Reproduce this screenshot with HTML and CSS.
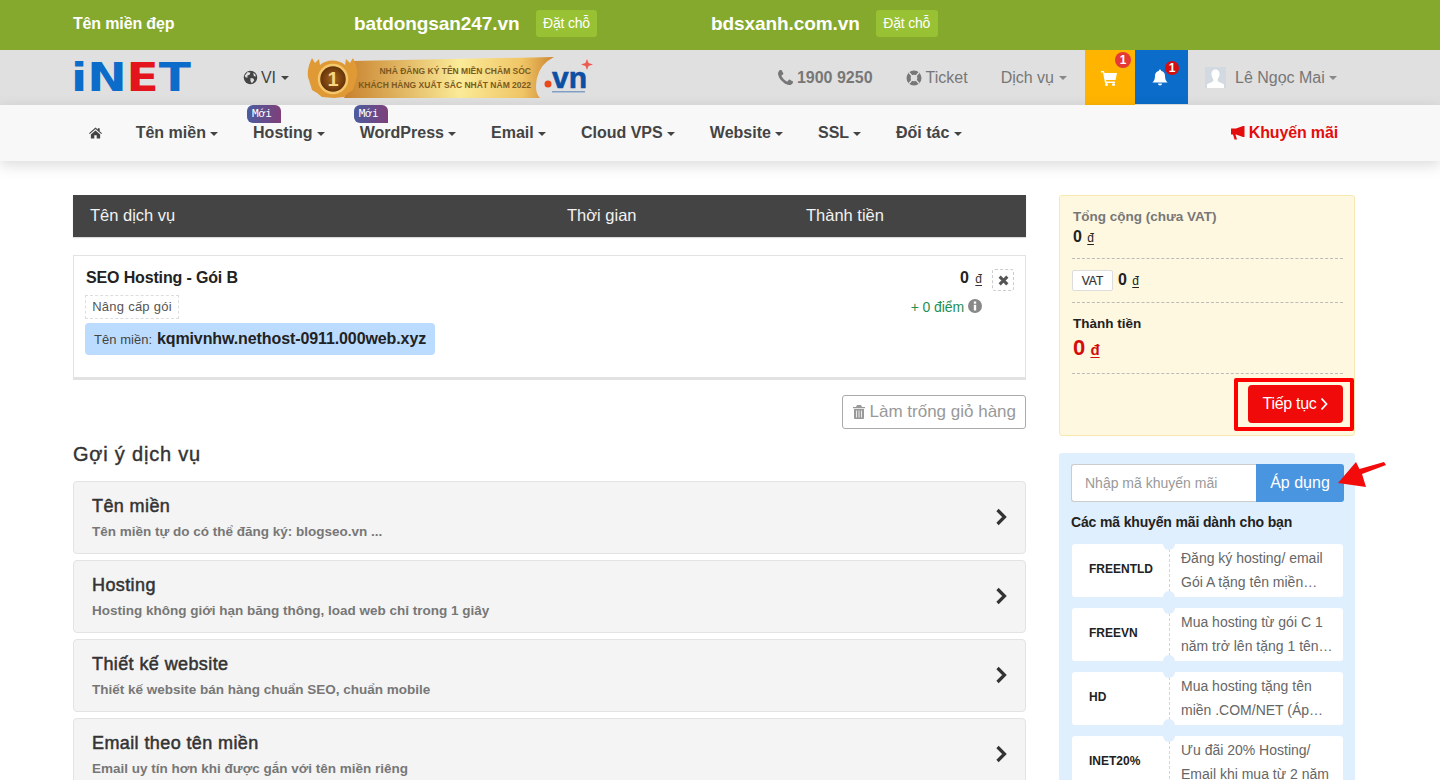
FILE: index.html
```html
<!DOCTYPE html>
<html lang="vi">
<head>
    <meta charset="UTF-8">
    <meta name="viewport" content="width=device-width, initial-scale=1.0">
    <title>Giỏ hàng - iNET</title>
    <link rel="stylesheet" href="styles.css">
</head>
<body>
    <div class="topbar">
        <div class="topbar-label">Tên miền đẹp</div>
        <div class="topbar-domain"><b>batdongsan247.vn</b><a class="btn-reserve">Đặt chỗ</a></div>
        <div class="topbar-domain"><b>bdsxanh.com.vn</b><a class="btn-reserve">Đặt chỗ</a></div>
    </div>

    <header class="header">
        <svg class="logo" viewBox="0 0 118 28" role="img" aria-label="iNET">
            <text x="-2" y="28" textLength="120" lengthAdjust="spacingAndGlyphs"><tspan class="logo-blue">iN</tspan><tspan class="logo-red">E</tspan><tspan class="logo-blue">T</tspan></text>
        </svg>
        <div class="lang">
            <svg class="ico-globe" viewBox="0 0 16 16"><circle cx="8" cy="8" r="7.2" fill="#444"/><path d="M5 2 8 3 7 5 4.500 6 5 8 3 8 1.800 6ZM8 8.500l3 .5 1 2-2.500 3-1.500-2ZM11 3l2 1.500.8 2.500-2.300-.5Z" fill="#e0e0e0"/></svg>
            <span>VI</span><i class="caret"></i>
        </div>
        <svg class="banner" viewBox="0 0 289 43">
            <defs>
                <linearGradient id="ribbon" x1="0" x2="1" y1="0" y2="0">
                    <stop offset="0" stop-color="#c8822e"/>
                    <stop offset=".55" stop-color="#fbeb98"/>
                    <stop offset=".85" stop-color="#f0c566"/>
                    <stop offset="1" stop-color="#cd852f"/>
                </linearGradient>
                <radialGradient id="medal">
                    <stop offset="0" stop-color="#a8641a"/>
                    <stop offset="1" stop-color="#5e2e08"/>
                </radialGradient>
            </defs>
            <path d="M44 5 246 1Q232 8 229 22T232 42H36Q44 24 44 5Z" fill="url(#ribbon)"/>
            <path d="M4 2 7 7 11 3 12 9 C18 3 31 3 37 9L38 3 42 7 45 2C50 12 50 20 48 24L45 34 40 37 36 41 26 42 14 41 9 37 4 34 1 24C-1 20-1 12 4 2Z" fill="#e09a35"/>
            <circle cx="25" cy="23" r="14" fill="url(#medal)" stroke="#f4c76a" stroke-width="2.500"/>
            <text class="banner-num" x="25" y="30" text-anchor="middle">1</text>
            <text class="banner-text" x="223" y="18" text-anchor="end">NHÀ ĐĂNG KÝ TÊN MIỀN CHĂM SÓC</text>
            <text class="banner-text" x="223" y="32" text-anchor="end">KHÁCH HÀNG XUẤT SẮC NHẤT NĂM 2022</text>
            <circle cx="240" cy="28" r="3.500" fill="#e8481c"/>
            <text class="banner-vn" x="244" y="32">vn</text>
            <rect x="244" y="35" width="33" height="1.500" fill="#0d4fa3" opacity=".45"/>
            <path d="M277.500 7 279 3 280.500 7 285 8.500 280.500 10 279 14 277.500 10 273 8.500Z" fill="#ee5a4f"/>
        </svg>

        <div class="header-right">
            <div class="header-link phone">
                <svg class="ico" viewBox="0 0 1408 1408"><path d="M1408 1112q0 27-10 70.500t-21 68.500q-21 50-122 106-94 51-186 51-27 0-53-3.500t-57.500-12.500-47-14.500-55.500-20.500-49-18q-98-35-175-83-127-79-264-216t-216-264q-48-77-83-175-3-9-18-49t-20.500-55.500-14.500-47-12.500-57.500-3.500-53q0-92 51-186 56-101 106-122 25-11 68.500-21t70.500-10q14 0 21 3 18 6 53 76 11 19 30 54t35 63.500 31 53.500q3 4 17.500 25t21.500 35.500 7 28.500q0 20-28.500 50t-62 55-62 53-28.500 46q0 9 5 22.500t8.500 20.500 14 24 11.500 19q76 137 174 235t235 174q2 1 19 11.500t24 14 20.500 8.500 22.500 5q18 0 46-28.500t53-62 55-62 50-28.500q14 0 28.500 7t35.500 21.500 25 17.500q25 15 53.500 31t63.500 35 54 30q70 35 76 53 3 7 3 21z" fill="#777"/></svg>
                <b>1900 9250</b>
            </div>
            <div class="header-link ticket">
                <svg class="ico-ring" viewBox="0 0 16 16"><circle cx="8" cy="8" r="7.500" fill="#777"/><circle cx="8" cy="8" r="3.300" fill="#e0e0e0"/><path d="M3 2.500 6 6M13 2.500 10 6M3 13.500 6 10M13 13.500 10 10" stroke="#e0e0e0" stroke-width="1.300"/></svg>
                <span>Ticket</span>
            </div>
            <div class="header-link service"><span>Dịch vụ</span><i class="caret caret-grey"></i></div>
            <div class="box-cart">
                <svg class="ico-cart" viewBox="0 0 16 16"><path d="M0 1h3l.500 2H16l-1.500 7H5l.300 1.500H14V13H4L2 2.500H0Z" fill="#fff"/><circle cx="5.500" cy="14.500" r="1.500" fill="#fff"/><circle cx="12.500" cy="14.500" r="1.500" fill="#fff"/></svg>
                <span class="badge badge-cart">1</span>
            </div>
            <div class="box-bell">
                <svg class="ico-bell" viewBox="0 0 16 16"><path d="M8 0a1 1 0 0 1 1 1.200C11.500 1.700 13 3.700 13 6c0 4 1 5.500 2.500 7H.500C2 11.500 3 10 3 6c0-2.300 1.500-4.300 4-4.800A1 1 0 0 1 8 0ZM6 14h4a2 2 0 0 1-4 0Z" fill="#fff"/></svg>
                <span class="badge badge-bell">1</span>
            </div>
            <div class="user">
                <svg class="avatar" viewBox="0 0 21 21"><rect width="21" height="21" fill="#d3d9e0"/><path d="M10.500 2.500c3 0 4.200 2.500 4 5-.2 2-1 3.500-1.800 4.500v2c1 1.500 5 2 6.300 3.500V21H2v-3.500c1.300-1.500 5.300-2 6.300-3.500v-2c-.8-1-1.600-2.500-1.800-4.500-.2-2.500 1-5 4-5Z" fill="#fff"/></svg>
                <span>Lê Ngọc Mai</span><i class="caret caret-grey"></i>
            </div>
        </div>
    </header>

    <nav class="nav">
        <svg class="ico-home" viewBox="0 0 14 12"><path d="M7 0 9.500 2.300V1H11.500V4.100L14 6.400 13.200 7.200 7 1.800 .8 7.200 0 6.400ZM2 7.600 7 3.200 12 7.600V12H8.300V8.500H5.700V12H2Z" fill="#444"/></svg>
        <a class="nav-item">Tên miền <i class="caret"></i></a>
        <a class="nav-item">Hosting <i class="caret"></i><span class="tag-new">Mới</span></a>
        <a class="nav-item">WordPress <i class="caret"></i><span class="tag-new">Mới</span></a>
        <a class="nav-item">Email <i class="caret"></i></a>
        <a class="nav-item">Cloud VPS <i class="caret"></i></a>
        <a class="nav-item">Website <i class="caret"></i></a>
        <a class="nav-item">SSL <i class="caret"></i></a>
        <a class="nav-item">Đối tác <i class="caret"></i></a>
        <a class="nav-promo">
            <svg class="ico-horn" viewBox="0 0 14 14"><path d="M12 0h1.500v11H12L5 8.500H4.500L6 13.500H3.500L2 8.500H0V2.500H5Z" fill="#e30d0d"/></svg>
            Khuyến mãi
        </a>
    </nav>

    <main class="main">
        <section class="col-left">
            <div class="cart-head">
                <div class="cart-head-name">Tên dịch vụ</div>
                <div class="cart-head-time">Thời gian</div>
                <div>Thành tiền</div>
            </div>

            <div class="cart-item">
                <div class="cart-item-info">
                    <div class="cart-item-title">SEO Hosting - Gói B</div>
                    <a class="chip-upgrade">Nâng cấp gói</a>
                    <div class="domain-pill">Tên miền: <b>kqmivnhw.nethost-0911.000web.xyz</b></div>
                </div>
                <div class="cart-item-price">
                    <div class="price-line"><b>0</b> <u>đ</u></div>
                    <div class="points">+ 0 điểm
                        <svg class="ico-info" viewBox="0 0 14 14"><circle cx="7" cy="7" r="7" fill="#888"/><rect x="5.800" y="2.500" width="2.400" height="2.200" fill="#fff"/><rect x="5.800" y="5.800" width="2.400" height="5.700" fill="#fff"/></svg>
                    </div>
                </div>
                <a class="btn-remove"><svg viewBox="0 0 10 10"><path d="M1.500 1.500 8.500 8.500M8.500 1.500 1.500 8.500" stroke="#555" stroke-width="2.800"/></svg></a>
            </div>

            <div class="cart-actions">
                <a class="btn-empty">
                    <svg class="ico-trash" viewBox="0 0 12 14"><path d="M4 0h4l1 2h3v1.300H0V2h3ZM1 4h10v9a1 1 0 0 1-1 1H2a1 1 0 0 1-1-1Z" fill="#999"/><path d="M3.500 5.500v7M6 5.500v7M8.500 5.500v7" stroke="#fff" stroke-width=".8"/></svg>
                    Làm trống giỏ hàng
                </a>
            </div>

            <h2 class="suggest-title">Gợi ý dịch vụ</h2>
            <a class="suggest-card">
                <div><h3>Tên miền</h3><p>Tên miền tự do có thể đăng ký: blogseo.vn ...</p></div>
                <svg class="ico-next" viewBox="0 0 12 18"><path d="M2.500 2 9.500 9 2.500 16" fill="none" stroke="#333" stroke-width="3.200"/></svg>
            </a>
            <a class="suggest-card">
                <div><h3>Hosting</h3><p>Hosting không giới hạn băng thông, load web chỉ trong 1 giây</p></div>
                <svg class="ico-next" viewBox="0 0 12 18"><path d="M2.500 2 9.500 9 2.500 16" fill="none" stroke="#333" stroke-width="3.200"/></svg>
            </a>
            <a class="suggest-card">
                <div><h3>Thiết kế website</h3><p>Thiết kế website bán hàng chuẩn SEO, chuẩn mobile</p></div>
                <svg class="ico-next" viewBox="0 0 12 18"><path d="M2.500 2 9.500 9 2.500 16" fill="none" stroke="#333" stroke-width="3.200"/></svg>
            </a>
            <a class="suggest-card">
                <div><h3>Email theo tên miền</h3><p>Email uy tín hơn khi được gắn với tên miền riêng</p></div>
                <svg class="ico-next" viewBox="0 0 12 18"><path d="M2.500 2 9.500 9 2.500 16" fill="none" stroke="#333" stroke-width="3.200"/></svg>
            </a>
        </section>

        <aside class="col-right">
            <div class="summary">
                <div class="summary-row summary-subtotal">
                    <div class="summary-label">Tổng cộng (chưa VAT)</div>
                    <div class="summary-price"><b>0</b> <u>đ</u></div>
                </div>
                <div class="summary-row summary-vat">
                    <span class="chip-vat">VAT</span>
                    <span class="summary-price"><b>0</b> <u>đ</u></span>
                </div>
                <div class="summary-row summary-total">
                    <div class="summary-label-dark">Thành tiền</div>
                    <div class="summary-price-red"><b>0</b> <u>đ</u></div>
                </div>
                <div class="summary-foot">
                    <a class="btn-continue">Tiếp tục <svg viewBox="0 0 8 14"><path d="M1.500 1.500 6.500 7 1.500 12.500" fill="none" stroke="#fff" stroke-width="1.800"/></svg></a>
                    <span class="highlight"></span>
                </div>
            </div>

            <div class="promo">
                <div class="promo-form">
                    <div class="promo-input">Nhập mã khuyến mãi</div>
                    <a class="promo-apply">Áp dụng</a>
                    <svg class="promo-arrow" viewBox="0 0 50 28"><path d="M1 22 19 1 22.500 8 47 1 49 4 25 13 29 26Z" fill="#f30a0a"/></svg>
                </div>
                <div class="promo-title">Các mã khuyến mãi dành cho bạn</div>
                <div class="coupon">
                    <div class="coupon-code">FREENTLD</div>
                    <div class="coupon-desc"><p>Đăng ký hosting/ email Gói A tặng tên miền .VN/.COM miễn phí</p></div>
                </div>
                <div class="coupon">
                    <div class="coupon-code">FREEVN</div>
                    <div class="coupon-desc"><p>Mua hosting từ gói C 1 năm trở lên tặng 1 tên miền .VN miễn phí</p></div>
                </div>
                <div class="coupon">
                    <div class="coupon-code">HD</div>
                    <div class="coupon-desc"><p>Mua hosting tặng tên miền .COM/NET (Áp dụng cho gói năm)</p></div>
                </div>
                <div class="coupon">
                    <div class="coupon-code">INET20%</div>
                    <div class="coupon-desc"><p>Ưu đãi 20% Hosting/ Email khi mua từ 2 năm</p></div>
                </div>
            </div>
        </aside>
    </main>
</body>
</html>
```

FILE: styles.css
```css
* { margin: 0; padding: 0; box-sizing: border-box; }
html, body { height: 100%; overflow: hidden; }
body { font-family: "Liberation Sans", Arial, sans-serif; font-size: 14px; color: #333; background: #fff; }
svg { display: block; flex: none; }
u { text-underline-offset: 2px; }

.caret { display: inline-block; width: 0; height: 0; vertical-align: 2px; border-top: 4px solid #444; border-left: 4px solid transparent; border-right: 4px solid transparent; }
.caret-grey { border-top-color: #888; }

/* top bar */
.topbar { height: 50px; background: #85a92c; color: #fff; display: flex; align-items: center; padding-left: 73px; padding-bottom: 3px; }
.topbar-label { width: 281px; font-size: 16px; font-weight: bold; letter-spacing: -.15px; }
.topbar-domain { width: 357px; display: flex; align-items: center; gap: 16px; font-size: 19px; letter-spacing: -.08px; }
.btn-reserve { display: block; height: 27px; line-height: 27px; padding: 0 7.500px; background: #98c133; border-radius: 3px; font-size: 14px; letter-spacing: -.2px; }

/* header */
.header { height: 55px; background: #e0e0e0; display: flex; align-items: center; padding: 0 100px 0 73px; color: #777; }
.logo { width: 118px; height: 28px; overflow: visible; margin-top: -1px; }
.logo text { font-family: "DejaVu Sans", sans-serif; font-weight: bold; font-size: 39px; }
.logo-blue { fill: #0b6cc9; }
.logo-red { fill: #e3141b; }
.lang { display: flex; align-items: center; margin-left: 52px; color: #444; font-size: 16px; letter-spacing: -.2px; }
.lang .caret { margin-left: 5px; vertical-align: 0; }
.ico-globe { width: 15px; height: 15px; margin-right: 3px; }
.banner { width: 289px; height: 43px; margin-left: 19px; overflow: visible; }
.banner-text { font-size: 8.500px; font-weight: bold; fill: #7b5a1e; }
.banner-num { font-size: 20px; font-weight: bold; fill: #f7d583; }
.banner-vn { font-size: 30px; font-weight: bold; fill: #0d4fa3; stroke: #0d4fa3; stroke-width: .6px; }

.header-right { margin-left: auto; height: 55px; display: flex; align-items: center; }
.header-link { display: flex; align-items: center; font-size: 16px; }
.phone { margin-right: 33px; gap: 4px; }
.ico { width: 15px; height: 15px; }
.ticket { margin-right: 33px; gap: 4px; }
.ico-ring { width: 16px; height: 16px; }
.service { margin-right: 18px; gap: 5px; }
.box-cart { position: relative; width: 50px; height: 55px; background: #ffb400; display: flex; align-items: center; justify-content: center; }
.box-bell { position: relative; width: 53px; height: 54px; align-self: flex-start; background: #0b6cc9; display: flex; align-items: center; justify-content: center; }
.ico-cart { width: 16px; height: 16px; margin-right: 2px; }
.ico-bell { width: 16px; height: 17px; margin-right: 3px; }
.badge { position: absolute; display: block; border-radius: 50%; color: #fff; text-align: center; font-size: 12px; font-weight: bold; }
.badge-cart { top: 2px; left: 30px; width: 16px; height: 16px; line-height: 16px; background: #e53935; }
.badge-bell { top: 11px; left: 30px; width: 14px; height: 14px; line-height: 14px; background: #d70e0e; }
.user { display: flex; align-items: center; width: 152px; padding-left: 17px; font-size: 16px; }
.avatar { width: 21px; height: 21px; margin-right: 9px; }
.user .caret { margin-left: 4px; }

/* nav */
.nav { position: relative; height: 56px; background: #f8f8f8; display: flex; align-items: center; gap: 34.700px; padding: 0 102px 0 89px; box-shadow: 0 4px 14px rgba(0,0,0,.15); font-size: 16px; font-weight: bold; color: #444; }
.ico-home { width: 13px; height: 12px; margin-top: -1px; margin-right: -1px; }
.nav-item { position: relative; display: block; white-space: nowrap; }
.tag-new { position: absolute; top: -19px; left: -6px; width: 34px; height: 18px; line-height: 18px; padding-left: 5px; border-radius: 6px 6px 0 6px; background: linear-gradient(90deg, #4a5c9f, #7f3f79); color: #fff; font-family: "DejaVu Sans Mono", "Liberation Mono", monospace; font-size: 11px; font-weight: normal; }
.nav-promo { margin-left: auto; display: flex; align-items: center; gap: 4px; color: #e30d0d; letter-spacing: -.15px; }
.ico-horn { width: 14px; height: 14px; }

/* layout */
.main { display: flex; padding: 34px 85px 0 73px; gap: 33px; }
.col-left { width: 953px; }
.col-right { width: 296px; }

/* cart */
.cart-head { height: 42px; padding-bottom: 1px; background: #444; color: #f2f2f2; display: flex; align-items: center; font-size: 16.500px; box-shadow: 0 1px 1px #ddd; }
.cart-head-name { width: 494px; padding-left: 17px; }
.cart-head-time { width: 239px; }

.cart-item { margin-top: 18px; height: 123px; border: 1px solid #e2e2e2; box-shadow: 0 2px 0 #e2e2e2; display: flex; padding: 13px 11px 0 11px; }
.cart-item-info { flex: 1; }
.cart-item-title { font-size: 16px; font-weight: bold; color: #222; line-height: 18px; margin-left: 1px; letter-spacing: -.15px; }
.chip-upgrade { display: block; width: 94px; height: 24px; line-height: 22px; margin-top: 8px; border: 1px dashed #ddd; text-align: center; font-size: 13px; letter-spacing: .25px; color: #555; }
.domain-pill { display: inline-block; height: 32px; line-height: 31px; margin-top: 4px; padding: 0 9px; background: #bbdcff; border-radius: 4px; font-size: 13px; letter-spacing: .05px; color: #444; }
.domain-pill b { font-size: 16px; color: #222; margin-left: 1px; letter-spacing: -.1px; }
.cart-item-price { width: 120px; margin-right: 10px; text-align: right; }
.price-line { font-size: 12px; line-height: 18px; color: #333; }
.price-line b { font-size: 16px; color: #222; margin-right: 3px; }
.points { display: flex; align-items: center; justify-content: flex-end; gap: 4px; margin-top: 11px; color: #1e9052; font-size: 14px; letter-spacing: -.1px; }
.ico-info { width: 14px; height: 14px; margin-top: -2px; }
.btn-remove { width: 22px; height: 22px; border: 1px dashed #ccc; border-radius: 3px; display: flex; align-items: center; justify-content: center; }
.btn-remove svg { width: 11px; height: 11px; }

.cart-actions { display: flex; justify-content: flex-end; margin-top: 17px; }
.btn-empty { height: 34px; border: 1px solid #aaa; border-radius: 3px; display: flex; align-items: center; gap: 5px; padding: 0 9px 0 10px; color: #999; font-size: 17px; }
.ico-trash { width: 12px; height: 14px; }

/* suggestions */
.suggest-title { margin-top: 13px; font-size: 20px; font-weight: normal; line-height: 24px; letter-spacing: .8px; color: #333; -webkit-text-stroke: .4px #333; }
.suggest-card { height: 73px; margin-top: 6px; padding: 0 18px; display: flex; align-items: center; justify-content: space-between; background: #f4f4f4; border: 1px solid #e3e3e3; border-radius: 4px; }
.suggest-title + .suggest-card { margin-top: 15px; }
.suggest-card h3 { font-size: 18px; font-weight: normal; line-height: 22px; letter-spacing: .4px; color: #333; -webkit-text-stroke: .5px #333; }
.suggest-card p { margin-top: 6px; font-size: 13.500px; font-weight: bold; color: #777; line-height: 18px; }
.ico-next { width: 12px; height: 18px; margin-top: -2px; }

/* summary */
.summary { height: 241px; padding: 11px 11px 0 12px; background: #fef8e1; border: 1px solid #f9e9b0; border-radius: 3px; }
.summary-row { border-bottom: 1px dashed #bbb; }
.summary-subtotal { height: 52px; padding-top: 1px; }
.summary-label { margin-left: 1px; font-size: 13.500px; font-weight: bold; line-height: 17px; color: #777; }
.summary-price { margin-left: 1px; font-size: 12px; line-height: 24px; color: #222; }
.summary-price b { font-size: 16px; margin-right: 2px; }
.summary-vat { height: 44px; display: flex; align-items: center; gap: 4px; }
.chip-vat { display: block; width: 41px; height: 21px; line-height: 20px; background: #fff; border: 1px solid #ddd; border-radius: 2px; text-align: center; font-size: 12px; color: #333; -webkit-text-stroke: .2px #333; }
.summary-total { height: 71px; padding-top: 12px; }
.summary-label-dark { margin-left: 1px; font-size: 13.500px; font-weight: bold; line-height: 18px; color: #222; }
.summary-price-red { margin-left: 1px; margin-top: 1px; font-size: 15px; line-height: 28px; font-weight: bold; color: #d40c0c; }
.summary-price-red b { font-size: 22px; margin-right: 1px; }
.summary-foot { position: relative; display: flex; justify-content: flex-end; margin-top: 11px; }
.btn-continue { display: flex; align-items: center; justify-content: center; gap: 4px; width: 95px; height: 38px; background: #f00a0a; border-radius: 4px; color: #fff; font-size: 16px; letter-spacing: -.3px; }
.btn-continue svg { width: 8px; height: 14px; }
.highlight { position: absolute; right: -11px; top: -7px; width: 120px; height: 53px; border: 4px solid #f00; border-radius: 2px; }

/* promo */
.promo { margin-top: 17px; padding: 11px 12px 20px; background: #dfeffe; border-radius: 3px; height: 600px; }
.promo-form { position: relative; display: flex; height: 38px; width: 273px; }
.promo-input { width: 185px; line-height: 36px; padding-left: 13px; background: #fff; border: 1px solid #ccc; border-right: 0; border-radius: 3px 0 0 3px; color: #999; font-size: 14px; }
.promo-apply { width: 88px; line-height: 37px; text-align: center; background: #4a95e0; border-radius: 0 3px 3px 0; color: #fff; font-size: 16px; }
.promo-arrow { position: absolute; left: 266px; top: -3px; width: 50px; height: 28px; overflow: visible; }
.promo-title { margin-top: 12px; font-size: 14px; font-weight: bold; line-height: 17px; color: #222; letter-spacing: -.15px; }

.coupon { position: relative; width: 271px; height: 53px; margin: 11px 0 0 1px; display: flex; background: #fff; border-radius: 3px; }
.promo-title + .coupon { margin-top: 13px; }
.coupon::before, .coupon::after { content: ""; position: absolute; left: 91px; width: 12px; height: 12px; border-radius: 50%; background: #dfeffe; }
.coupon::before { top: -6px; }
.coupon::after { bottom: -6px; }
.coupon-code { width: 98px; line-height: 51px; padding-left: 17px; border-right: 1px dashed #b9dcf7; font-size: 12px; font-weight: bold; color: #222; }
.coupon-desc { flex: 1; padding: 2px 6px 0 11px; }
.coupon-desc p { display: -webkit-box; -webkit-line-clamp: 2; -webkit-box-orient: vertical; overflow: hidden; font-size: 14px; line-height: 24px; color: #666; }
```
